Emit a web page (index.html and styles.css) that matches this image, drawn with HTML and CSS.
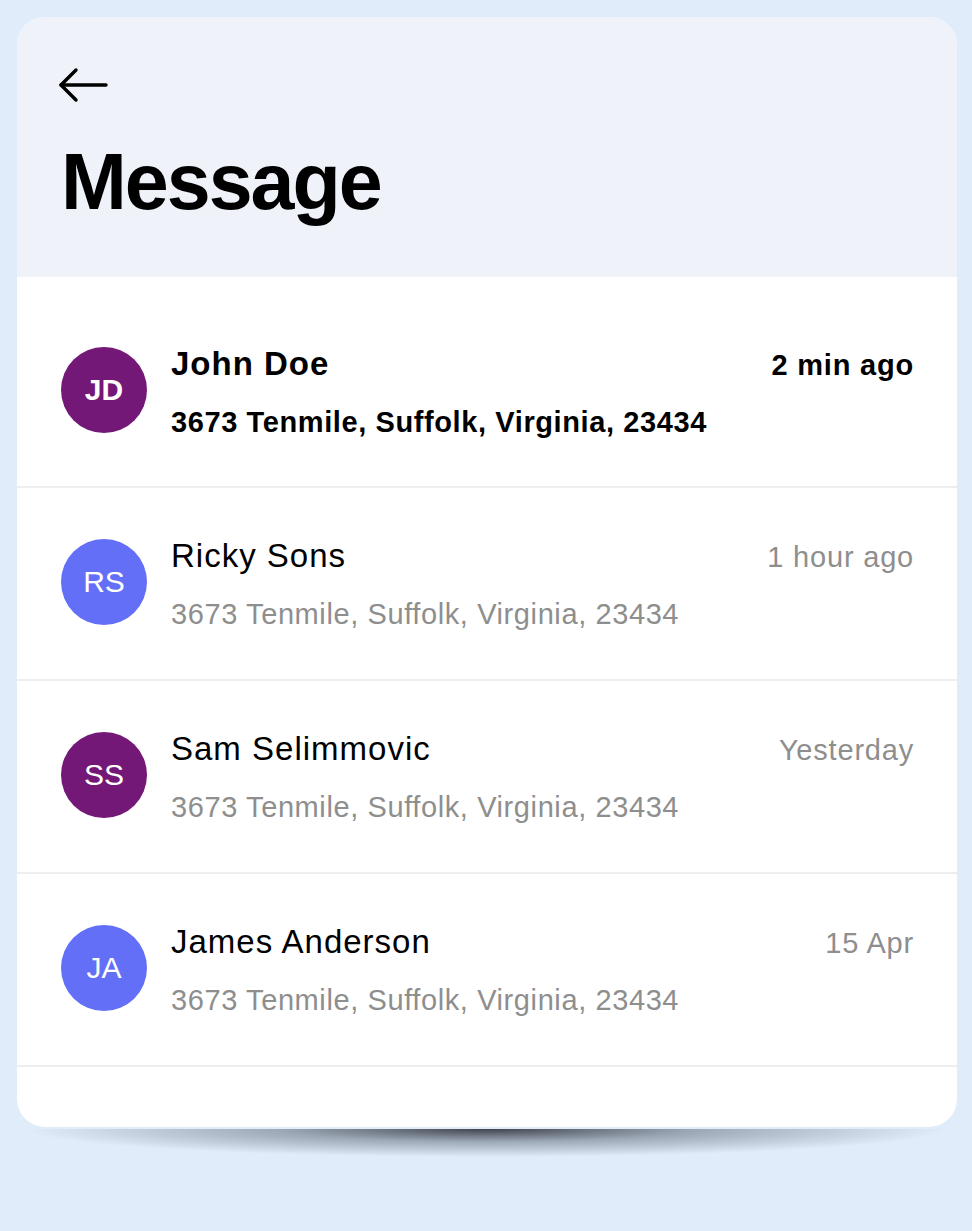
FILE: index.html
```html
<!DOCTYPE html>
<html lang="en">
<head>
  <meta charset="UTF-8">
  <meta name="viewport" content="width=device-width, initial-scale=1.0">
  <title>Message</title>
  <link rel="stylesheet" href="styles.css">
</head>
<body>
<div class="card">
  <div class="card-header">
    <button class="back-btn" aria-label="Back">
      <svg width="52" height="40" viewBox="0 0 52 40" fill="none" stroke="#000" stroke-width="3.4" stroke-linecap="round" stroke-linejoin="round">
        <path d="M49 20H4"/>
        <path d="M19 5L4 20L19 35"/>
      </svg>
    </button>
    <h1>Message</h1>
  </div>

  <ul class="message-list">
    <li class="message unread">
      <div class="avatar purple">JD</div>
      <div class="message-body">
        <div class="message-top">
          <span class="name">John Doe</span>
          <span class="time">2 min ago</span>
        </div>
        <div class="address">3673 Tenmile, Suffolk, Virginia, 23434</div>
      </div>
    </li>
    <li class="message">
      <div class="avatar blue">RS</div>
      <div class="message-body">
        <div class="message-top">
          <span class="name">Ricky Sons</span>
          <span class="time">1 hour ago</span>
        </div>
        <div class="address">3673 Tenmile, Suffolk, Virginia, 23434</div>
      </div>
    </li>
    <li class="message">
      <div class="avatar purple">SS</div>
      <div class="message-body">
        <div class="message-top">
          <span class="name">Sam Selimmovic</span>
          <span class="time">Yesterday</span>
        </div>
        <div class="address">3673 Tenmile, Suffolk, Virginia, 23434</div>
      </div>
    </li>
    <li class="message">
      <div class="avatar blue">JA</div>
      <div class="message-body">
        <div class="message-top">
          <span class="name">James Anderson</span>
          <span class="time">15 Apr</span>
        </div>
        <div class="address">3673 Tenmile, Suffolk, Virginia, 23434</div>
      </div>
    </li>
  </ul>
</div>
<div class="card-shadow"></div>
</body>
</html>
```

FILE: styles.css
```css
body {
  font-family: "Liberation Sans", Arial, sans-serif;
  margin: 0;
  padding: 17px 16px 0 17px;
  background-color: #e0ecfa;
  color: #000;
}

.card {
  width: 940px;
  background-color: #ffffff;
  border-radius: 28px;
  overflow: hidden;
}

.card-header {
  background-color: #eff3f9;
  height: 260px;
  box-sizing: border-box;
  padding: 48px 0 0 40px;
}

.back-btn {
  display: block;
  padding: 0;
  border: none;
  background: none;
  cursor: pointer;
  height: 40px;
}

.card-header h1 {
  margin: 32px 0 0 4px;
  font-size: 79px;
  line-height: 90px;
  font-weight: bold;
  letter-spacing: -2px;
}

.message-list {
  list-style: none;
  margin: 0;
  padding: 19px 0 60px 0;
}

.message {
  display: flex;
  align-items: flex-start;
  gap: 24px;
  height: 191px;
  padding: 0 43px 0 44px;
  border-bottom: 2px solid #eeeeee;
}

.message:first-child {
  height: 190px;
}

.avatar {
  flex: none;
  width: 86px;
  height: 86px;
  margin-top: 51px;
  border-radius: 50%;
  display: flex;
  align-items: center;
  justify-content: center;
  color: #fff;
  font-size: 30px;
}

.purple {
  background-color: #741878;
}

.blue {
  background-color: #646ff7;
}

.message-body {
  flex: 1;
  padding-top: 50px;
}

.message-top {
  display: flex;
  justify-content: space-between;
  align-items: baseline;
}

.name {
  font-size: 33px;
  line-height: 36px;
  letter-spacing: 1px;
}

.time {
  font-size: 29px;
  letter-spacing: 0.8px;
  color: #8e8e8e;
}

.address {
  margin-top: 23px;
  font-size: 29px;
  line-height: 34px;
  letter-spacing: 0.6px;
  color: #8e8e8e;
}

.unread .name,
.unread .time,
.unread .address {
  font-weight: bold;
  color: #000;
}

.unread .avatar {
  font-weight: bold;
}

.card-shadow {
  width: 920px;
  height: 28px;
  margin: 2px 0 0 10px;
  background: radial-gradient(ellipse 50% 100% at 50% 0%, rgba(55, 60, 68, 0.95) 0%, rgba(90, 100, 115, 0.5) 45%, rgba(224, 236, 250, 0) 100%);
}
```
